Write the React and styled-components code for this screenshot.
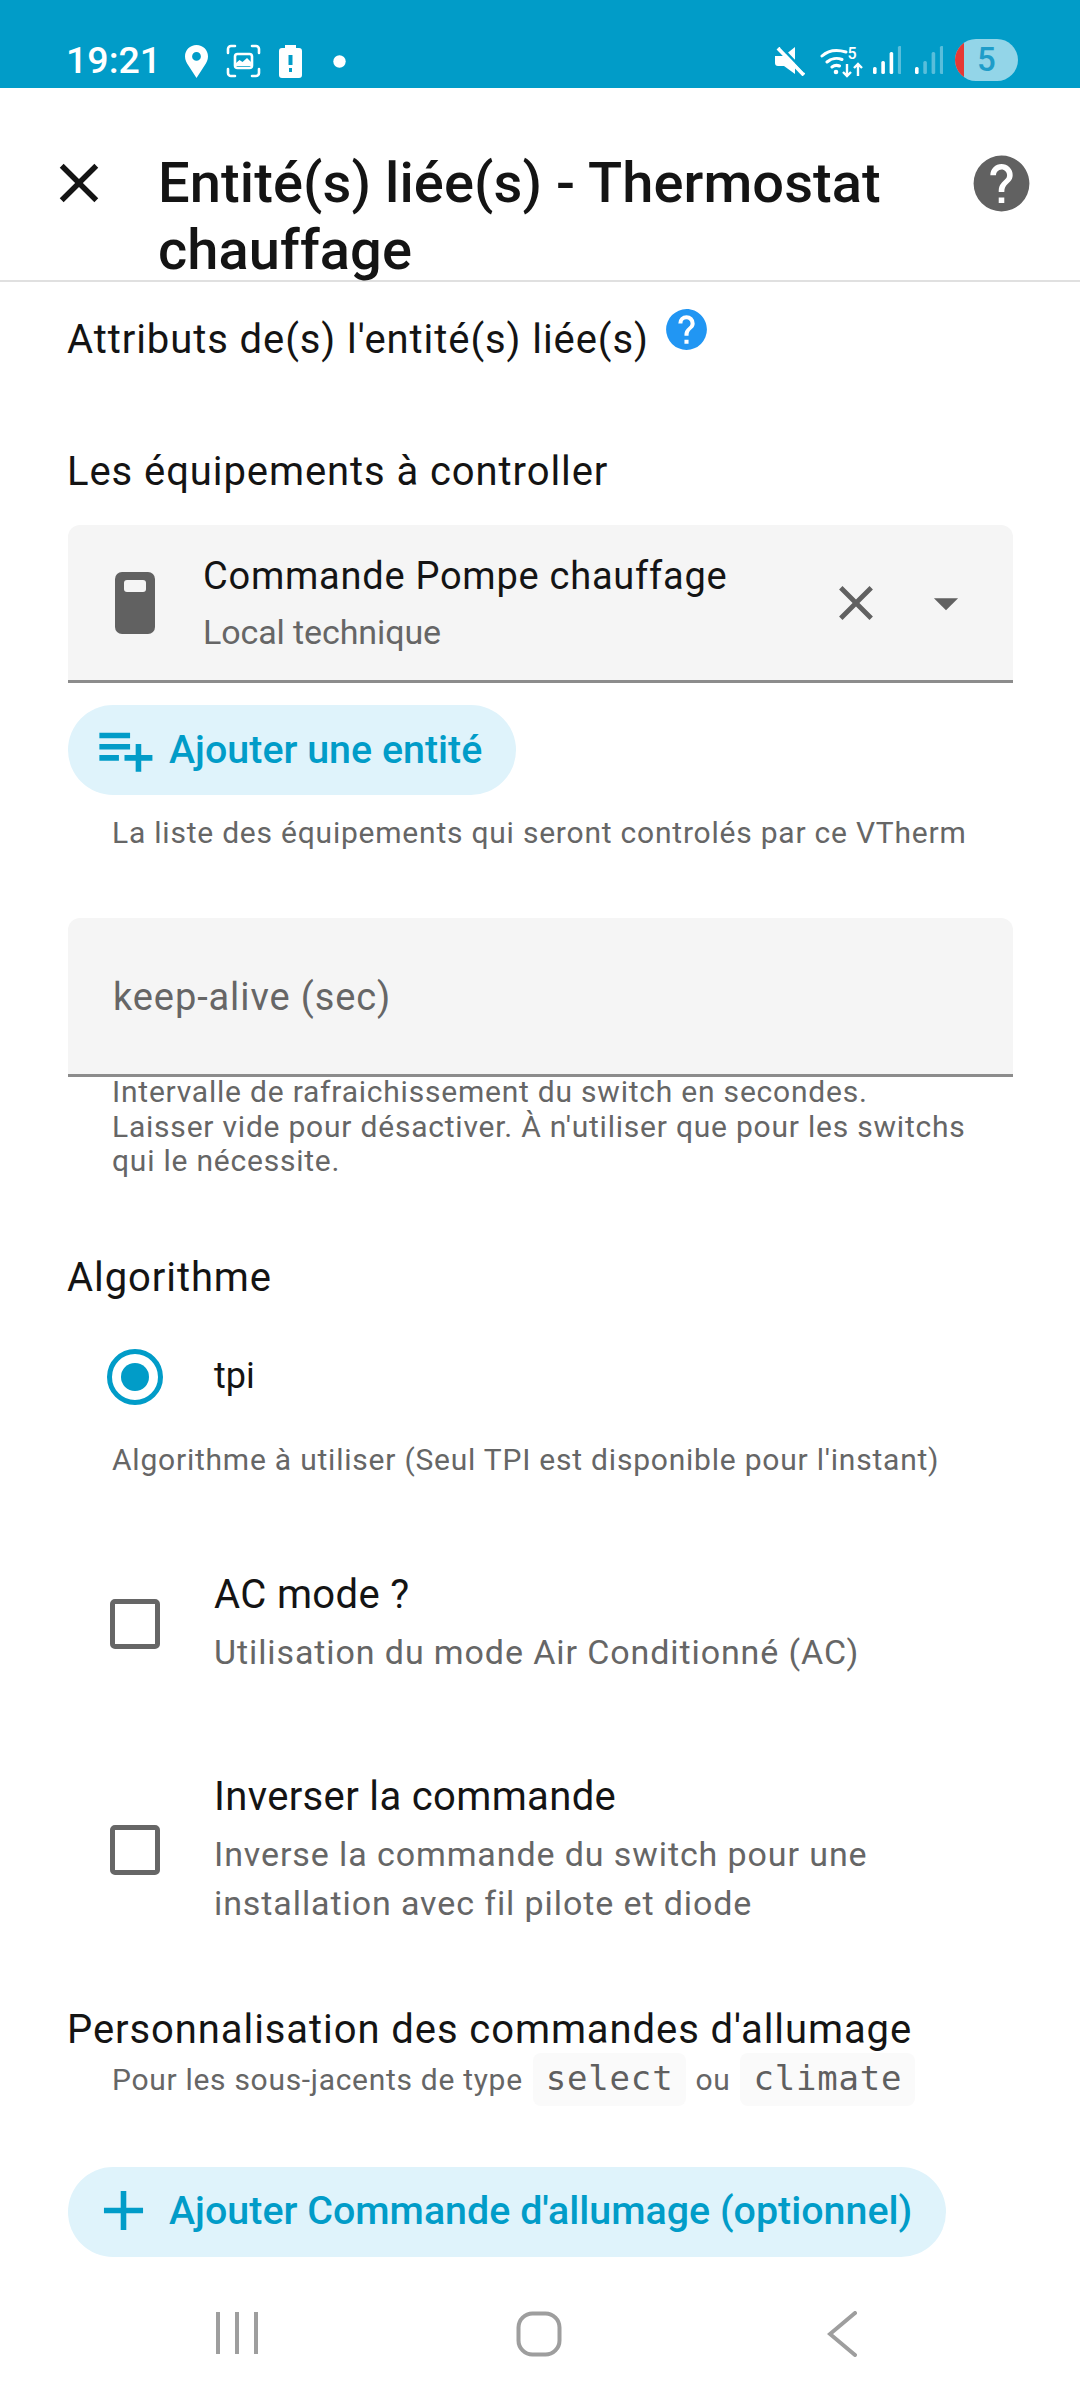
import React from "react";
import styled, { createGlobalStyle } from "styled-components";

const GlobalStyle = createGlobalStyle`
  html, body {
    margin: 0;
    padding: 0;
    background: #fff;
  }
  body {
    font-family: Roboto, "Liberation Sans", sans-serif;
  }
`;

const Page = styled.div`
  width: 1080px;
  height: 2400px;
  display: flex;
  flex-direction: column;
  overflow: hidden;
  background: #fff;
`;

/* barre de statut */
const StatusBar = styled.div`
  height: 88px;
  flex: none;
  box-sizing: border-box;
  background: #019cc8;
  display: flex;
  align-items: flex-start;
  padding: 39px 62px 0 66px;
  color: #fff;
`;

const Time = styled.div`
  font-size: 37.5px;
  font-weight: 500;
  line-height: 42px;
  width: 93px;
  margin-right: 26px;
  white-space: nowrap;
`;

const StatusIcon = styled.svg`
  flex: none;
  display: block;
  margin-left: ${(p) => p.$left || 0}px;
  margin-top: ${(p) => p.$top || 0}px;
`;

const Spacer = styled.div`
  flex: 1;
`;

const BatteryPill = styled.div`
  width: 63px;
  height: 42px;
  margin-left: 12px;
  border-radius: 21px;
  overflow: hidden;
  background: #93d5e8;
  display: flex;
  flex: none;
`;

const BatteryRed = styled.div`
  width: 9px;
  background: #e53935;
  flex: none;
`;

const BatteryLevel = styled.div`
  flex: 1;
  color: #1f9dc9;
  font-size: 33px;
  font-weight: 500;
  line-height: 42px;
  text-align: center;
  padding-right: 9px;
`;

/* en-tete */
const Header = styled.div`
  height: 194px;
  flex: none;
  box-sizing: border-box;
  border-bottom: 2px solid #e0e0e0;
  display: flex;
  align-items: flex-start;
  padding: 62px 45px 0 46px;
`;

const IconSvg = styled.svg`
  flex: none;
  display: block;
  fill: ${(p) => p.$color || "#616161"};
`;

const HeaderClose = styled.div`
  width: 66px;
  height: 66px;
  flex: none;
  margin-right: 46px;
`;

const Title = styled.div`
  width: 770px;
  flex: none;
  font-size: 56px;
  font-weight: 500;
  line-height: 67px;
  letter-spacing: 0.1px;
  color: #141414;
`;

const HeaderHelp = styled.div`
  margin-left: auto;
`;

/* contenu */
const Content = styled.div`
  flex: 1;
  min-height: 0;
  overflow: hidden;
  padding: 0 67px 0 68px;
  display: flex;
  flex-direction: column;
  align-items: flex-start;
`;

const SectionLabel = styled.div`
  margin-top: ${(p) => p.$top}px;
  margin-left: -1px;
  font-size: 40px;
  line-height: 46px;
  letter-spacing: 0.92px;
  color: #141414;
  display: flex;
  white-space: nowrap;
`;

const LabelHelp = styled.span`
  display: block;
  width: 49px;
  height: 49px;
  margin: -12px 0 0 13px;
`;

const Field = styled.div`
  width: 100%;
  height: ${(p) => p.$height}px;
  margin-top: ${(p) => p.$top}px;
  box-sizing: border-box;
  background: #f5f5f5;
  border-radius: 12px 12px 0 0;
  border-bottom: 3px solid #8c8c8c;
  display: flex;
  align-items: center;
  flex: none;
`;

const SwitchIcon = styled.div`
  width: 40px;
  height: 62px;
  margin-left: 47px;
  margin-right: 49px;
  margin-top: 1px;
  border-radius: 7px;
  background: #616161;
  box-sizing: border-box;
  padding: 8px 9px 0;
  flex: none;
`;

const SwitchWindow = styled.div`
  height: 12px;
  border-radius: 3px;
  background: #f5f5f5;
`;

const FieldText = styled.div`
  flex: 1;
  min-width: 0;
  margin-left: -1px;
`;

const FieldTitle = styled.div`
  font-size: 38px;
  line-height: 46px;
  letter-spacing: 0.75px;
  color: #141414;
`;

const FieldSub = styled.div`
  font-size: 34px;
  line-height: 40px;
  margin-top: 13px;
  letter-spacing: -0.1px;
  color: #666;
`;

const FieldIcon = styled.div`
  width: 58px;
  height: 58px;
  flex: none;
  margin: ${(p) => p.$margin};
`;

const Placeholder = styled.div`
  margin-left: 45px;
  margin-top: 2px;
  font-size: 38px;
  line-height: 46px;
  letter-spacing: 0.9px;
  color: #666;
`;

const AddButton = styled.div`
  height: 90px;
  box-sizing: border-box;
  margin-top: ${(p) => p.$top}px;
  padding: 0 34px 2px ${(p) => p.$left}px;
  border-radius: 45px;
  background: #dff3fb;
  color: #019cc8;
  display: flex;
  align-items: center;
  font-size: 39.4px;
  font-weight: 500;
  white-space: nowrap;
  flex: none;
`;

const ButtonIcon = styled.div`
  width: 67px;
  height: 67px;
  flex: none;
  margin-right: ${(p) => p.$gap}px;
`;

const Helper = styled.div`
  margin-top: ${(p) => p.$top}px;
  padding-left: 44px;
  font-size: 30px;
  line-height: 34.4px;
  letter-spacing: 0.78px;
  color: #666;
`;

const RadioRow = styled.div`
  height: 96px;
  margin-top: 28px;
  padding-left: 39px;
  display: flex;
  align-items: center;
  flex: none;
`;

const RadioOuter = styled.div`
  width: 56px;
  height: 56px;
  border-radius: 50%;
  border: 5px solid #019cc8;
  box-sizing: border-box;
  display: flex;
  align-items: center;
  justify-content: center;
  margin-right: 51px;
`;

const RadioDot = styled.div`
  width: 28px;
  height: 28px;
  border-radius: 50%;
  background: #019cc8;
`;

const RadioLabel = styled.div`
  font-size: 36px;
  margin-top: -2px;
  color: #141414;
`;

const CheckRow = styled.div`
  margin-top: ${(p) => p.$top}px;
  padding-left: 42px;
  display: flex;
  align-items: center;
  flex: none;
`;

const CheckBox = styled.div`
  width: 50px;
  height: 50px;
  margin-top: -1px;
  box-sizing: border-box;
  border: 5px solid #666;
  border-radius: 5px;
  margin-right: 54px;
  flex: none;
`;

const CheckTitle = styled.div`
  font-size: 40px;
  line-height: 46px;
  letter-spacing: 0.35px;
  color: #141414;
`;

const CheckSub = styled.div`
  margin-top: 10px;
  font-size: 34px;
  line-height: 49px;
  letter-spacing: 0.9px;
  color: #666;
`;

const CodeLine = styled.div`
  margin-top: 0;
  padding-left: 44px;
  display: flex;
  align-items: center;
  font-size: 30px;
  letter-spacing: 0.7px;
  color: #666;
  white-space: nowrap;
`;

const Code = styled.code`
  font-family: "DejaVu Sans Mono", "Liberation Mono", monospace;
  font-size: 34px;
  line-height: 50px;
  height: 53px;
  letter-spacing: 0.8px;
  padding: 0 13px;
  margin: 0 ${(p) => p.$right}px 0 ${(p) => p.$left}px;
  border-radius: 8px;
  background: #fafafa;
  color: #5f5f5f;
`;

/* navigation android */
const NavBar = styled.div`
  height: 132px;
  flex: none;
  background: #fff;
  display: flex;
  align-items: flex-start;
  padding-top: 43px;
  box-sizing: border-box;
`;

const NavIcon = styled.svg`
  flex: none;
  display: block;
  margin-left: ${(p) => p.$left}px;
`;

const MDI = {
  close: "M19,6.41L17.59,5L12,10.59L6.41,5L5,6.41L10.59,12L5,17.59L6.41,19L12,13.41L17.59,19L19,17.59L13.41,12L19,6.41Z",
  help: "M15.07,11.25L14.17,12.17C13.45,12.89 13,13.5 13,15H11V14.5C11,13.39 11.45,12.39 12.17,11.67L13.41,10.41C13.78,10.05 14,9.55 14,9C14,7.89 13.1,7 12,7A2,2 0 0,0 10,9H8A4,4 0 0,1 12,5A4,4 0 0,1 16,9C16,9.88 15.64,10.67 15.07,11.25M13,19H11V17H13M12,2A10,10 0 0,0 2,12A10,10 0 0,0 12,22A10,10 0 0,0 22,12C22,6.47 17.5,2 12,2Z",
  playlistPlus: "M3 16H10V14H3M18 14V10H16V14H12V16H16V20H18V16H22V14M14 6H3V8H14M14 10H3V12H14V10Z",
  plus: "M19,13H13V19H11V13H5V11H11V5H13V11H19V13Z",
  menuDown: "M7,10L12,15L17,10H7Z",
};

const Mdi = ({ d, size, color }) => (
  <IconSvg viewBox="0 0 24 24" width={size} height={size} $color={color}>
    <path d={d} />
  </IconSvg>
);

const StatusIcons = () => (
  <>
    <StatusIcon width="23" height="33" viewBox="0 0 23 33" $top={6}>
      <path
        fill="#fff"
        fillRule="evenodd"
        d="M11.5 0C5 0 0 5 0 11.4c0 3.4 1.6 6.2 3.4 9.2L11.5 33l8.1-12.4c1.8-3 3.4-5.8 3.4-9.2C23 5 18 0 11.5 0Zm0 7a4.4 4.4 0 1 1 0 8.800a4.400 4.400 0 0 1 0-8.800Z"
      />
    </StatusIcon>
    <StatusIcon width="35" height="34" viewBox="0 0 35 34" $left={18} $top={5}>
      <path
        fill="none"
        stroke="#fff"
        strokeWidth="2.600"
        strokeLinecap="round"
        d="M2 9V5a3 3 0 0 1 3-3h4M26 2h4a3 3 0 0 1 3 3v4M33 25v4a3 3 0 0 1-3 3h-4M9 32H5a3 3 0 0 1-3-3v-4"
      />
      <rect x="9" y="10" width="17" height="14" rx="2.500" fill="none" stroke="#fff" strokeWidth="2.600" />
      <path fill="#fff" d="M10 22v-3l3.500-3 3 2 4.500-4 4 4v4Z" />
    </StatusIcon>
    <StatusIcon width="23" height="33" viewBox="0 0 23 33" $left={18} $top={6}>
      <path
        fill="#fff"
        fillRule="evenodd"
        d="M6 0h11v3h3a3 3 0 0 1 3 3v24a3 3 0 0 1-3 3H3a3 3 0 0 1-3-3V6a3 3 0 0 1 3-3h3Zm3.500 10v10h4V10Zm.500 13v4h3v-4Z"
      />
    </StatusIcon>
    <StatusIcon width="13" height="13" viewBox="0 0 13 13" $left={31} $top={16}>
      <circle cx="6.500" cy="6.500" r="6.200" fill="#fff" />
    </StatusIcon>
  </>
);

const SignalIcon = ({ left, lit }) => (
  <StatusIcon width="28" height="30" viewBox="0 0 28 30" $left={left} $top={7}>
    {[7, 13, 22, 28].map((h, i) => (
      <rect
        key={h}
        x={i * 8.3}
        y={28 - h}
        width="3.600"
        height={h}
        rx="1.500"
        fill="#fff"
        fillOpacity={i < lit ? 1 : 0.35}
      />
    ))}
  </StatusIcon>
);

const NetworkIcons = () => (
  <>
    <StatusIcon width="30" height="29" viewBox="0 0 30 29" $top={8}>
      <path fill="#fff" d="M0 9h7l3-1 10-8v27L9 19H3a3 3 0 0 1-3-3Z" />
      <path stroke="#fff" strokeWidth="4" d="M3 1 L29 28" />
      <path stroke="#019cc8" strokeWidth="2.500" d="M6 0 L30 25" />
    </StatusIcon>
    <StatusIcon width="44" height="37" viewBox="0 -6 44 37" $left={15} $top={2}>
      <path
        fill="none"
        stroke="#fff"
        strokeWidth="3"
        strokeLinecap="round"
        d="M2 9C8 3.500 16 2 26 5M7 15c4-3.500 10-4.500 15-2.500M12 20c2-1.500 5-2 7.500-1"
      />
      <circle cx="16" cy="25" r="2.300" fill="#fff" />
      <text x="27.500" y="12" fontFamily="Roboto, sans-serif" fontSize="16" fontWeight="500" fill="#fff">5</text>
      <path
        fill="none"
        stroke="#fff"
        strokeWidth="2.400"
        d="M27 17v12M23 25l4 4 4-4M38 29V17M34 21l4-4 4 4"
      />
    </StatusIcon>
    <SignalIcon left={9} lit={3} />
    <SignalIcon left={14} lit={1} />
  </>
);

const App = () => {
  return (
    <Page>
      <GlobalStyle />
      <StatusBar>
        <Time>19:21</Time>
        <StatusIcons />
        <Spacer />
        <NetworkIcons />
        <BatteryPill>
          <BatteryRed />
          <BatteryLevel>5</BatteryLevel>
        </BatteryPill>
      </StatusBar>

      <Header>
        <HeaderClose>
          <Mdi d={MDI.close} size={66} color="#141414" />
        </HeaderClose>
        <Title>Entité(s) liée(s) - Thermostat chauffage</Title>
        <HeaderHelp>
          <Mdi d={MDI.help} size={67} color="#616161" />
        </HeaderHelp>
      </Header>

      <Content>
        <SectionLabel $top={35}>
          Attributs de(s) l'entité(s) liée(s)
          <LabelHelp>
            <Mdi d={MDI.help} size={49} color="#2196f3" />
          </LabelHelp>
        </SectionLabel>

        <SectionLabel $top={86}>Les équipements à controller</SectionLabel>

        <Field $height={158} $top={30}>
          <SwitchIcon>
            <SwitchWindow />
          </SwitchIcon>
          <FieldText>
            <FieldTitle>Commande Pompe chauffage</FieldTitle>
            <FieldSub>Local technique</FieldSub>
          </FieldText>
          <FieldIcon $margin="0 0 0 0">
            <Mdi d={MDI.close} size={58} color="#616161" />
          </FieldIcon>
          <FieldIcon $margin="0 38px 0 32px">
            <Mdi d={MDI.menuDown} size={58} color="#616161" />
          </FieldIcon>
        </Field>

        <AddButton $top={22} $left={23}>
          <ButtonIcon $gap={11}>
            <Mdi d={MDI.playlistPlus} size={67} color="#019cc8" />
          </ButtonIcon>
          Ajouter une entité
        </AddButton>
        <Helper $top={21}>La liste des équipements qui seront controlés par ce VTherm</Helper>

        <Field $height={159} $top={68}>
          <Placeholder>keep-alive (sec)</Placeholder>
        </Field>
        <Helper $top={-2}>
          Intervalle de rafraichissement du switch en secondes.
          <br />
          Laisser vide pour désactiver. À n'utiliser que pour les switchs
          <br />
          qui le nécessite.
        </Helper>

        <SectionLabel $top={76}>Algorithme</SectionLabel>
        <RadioRow>
          <RadioOuter>
            <RadioDot />
          </RadioOuter>
          <RadioLabel>tpi</RadioLabel>
        </RadioRow>
        <Helper $top={18}>Algorithme à utiliser (Seul TPI est disponible pour l'instant)</Helper>

        <CheckRow $top={95}>
          <CheckBox />
          <div>
            <CheckTitle>AC mode ?</CheckTitle>
            <CheckSub>Utilisation du mode Air Conditionné (AC)</CheckSub>
          </div>
        </CheckRow>

        <CheckRow $top={96.5}>
          <CheckBox />
          <div>
            <CheckTitle>Inverser la commande</CheckTitle>
            <CheckSub>
              Inverse la commande du switch pour une
              <br />
              installation avec fil pilote et diode
            </CheckSub>
          </div>
        </CheckRow>

        <SectionLabel $top={79.5}>Personnalisation des commandes d'allumage</SectionLabel>
        <CodeLine>
          Pour les sous-jacents de type
          <Code $left={10} $right={9}>select</Code>
          ou
          <Code $left={10} $right={0}>climate</Code>
        </CodeLine>

        <AddButton $top={60.5} $left={22}>
          <ButtonIcon $gap={12}>
            <Mdi d={MDI.plus} size={67} color="#019cc8" />
          </ButtonIcon>
          Ajouter Commande d'allumage (optionnel)
        </AddButton>
      </Content>

      <NavBar>
        <NavIcon $left={216} width="42" height="44" viewBox="0 0 42 44">
          <path stroke="#9e9e9e" strokeWidth="4" d="M2 1v42M21 1v42M40 1v42" />
        </NavIcon>
        <NavIcon $left={258} width="46" height="46" viewBox="0 0 46 46">
          <rect x="2.500" y="2.500" width="41" height="41" rx="14" fill="none" stroke="#9e9e9e" strokeWidth="4" />
        </NavIcon>
        <NavIcon $left={265} width="30" height="46" viewBox="0 0 30 46">
          <path fill="none" stroke="#9e9e9e" strokeWidth="4" strokeLinecap="round" d="M28 2 3 23l25 21" />
        </NavIcon>
      </NavBar>
    </Page>
  );
};

export default App;
